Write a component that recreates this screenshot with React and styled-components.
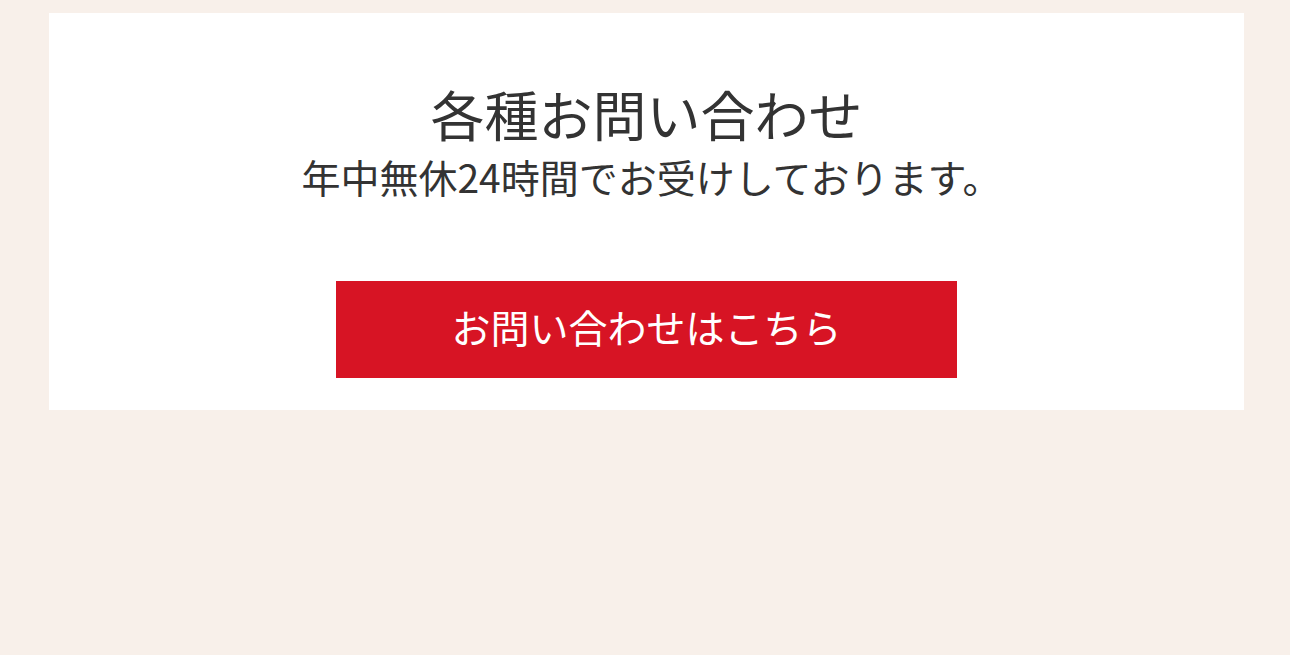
import styled, { createGlobalStyle } from 'styled-components'

const Global = createGlobalStyle`
  html, body {
    margin: 0;
    padding: 0;
    background: #f8f0ea;
  }
`

const Page = styled.div`
  padding: 13px 46px 0 49px;
  min-height: 655px;
  box-sizing: border-box;
`

const Card = styled.section`
  background: #ffffff;
  height: 397px;
  box-sizing: border-box;
  padding-top: 74px;
  display: flex;
  flex-direction: column;
  align-items: center;
`

const Title = styled.h2`
  margin: 0;
  font-family: "Liberation Serif", "Noto Sans CJK JP", serif;
  font-weight: normal;
  font-size: 54px;
  line-height: 64px;
  color: #333333;
`

const Sub = styled.p`
  margin: 0;
  padding-left: 10px;
  font-family: "Noto Sans CJK JP", sans-serif;
  font-size: 39px;
  line-height: 50px;
  color: #333333;
`

const Boton = styled.a`
  margin-top: 80px;
  width: 621px;
  height: 97px;
  padding-bottom: 8px;
  box-sizing: border-box;
  background: #d71424;
  color: #ffffff;
  display: flex;
  align-items: center;
  justify-content: center;
  font-family: "Noto Sans CJK JP", sans-serif;
  font-size: 39px;
  text-decoration: none;
`

export default function App() {
  return (
    <>
      <Global />
      <Page>
        <Card>
          <Title>各種お問い合わせ</Title>
          <Sub>年中無休24時間でお受けしております。</Sub>
          <Boton href="#">お問い合わせはこちら</Boton>
        </Card>
      </Page>
    </>
  )
}
